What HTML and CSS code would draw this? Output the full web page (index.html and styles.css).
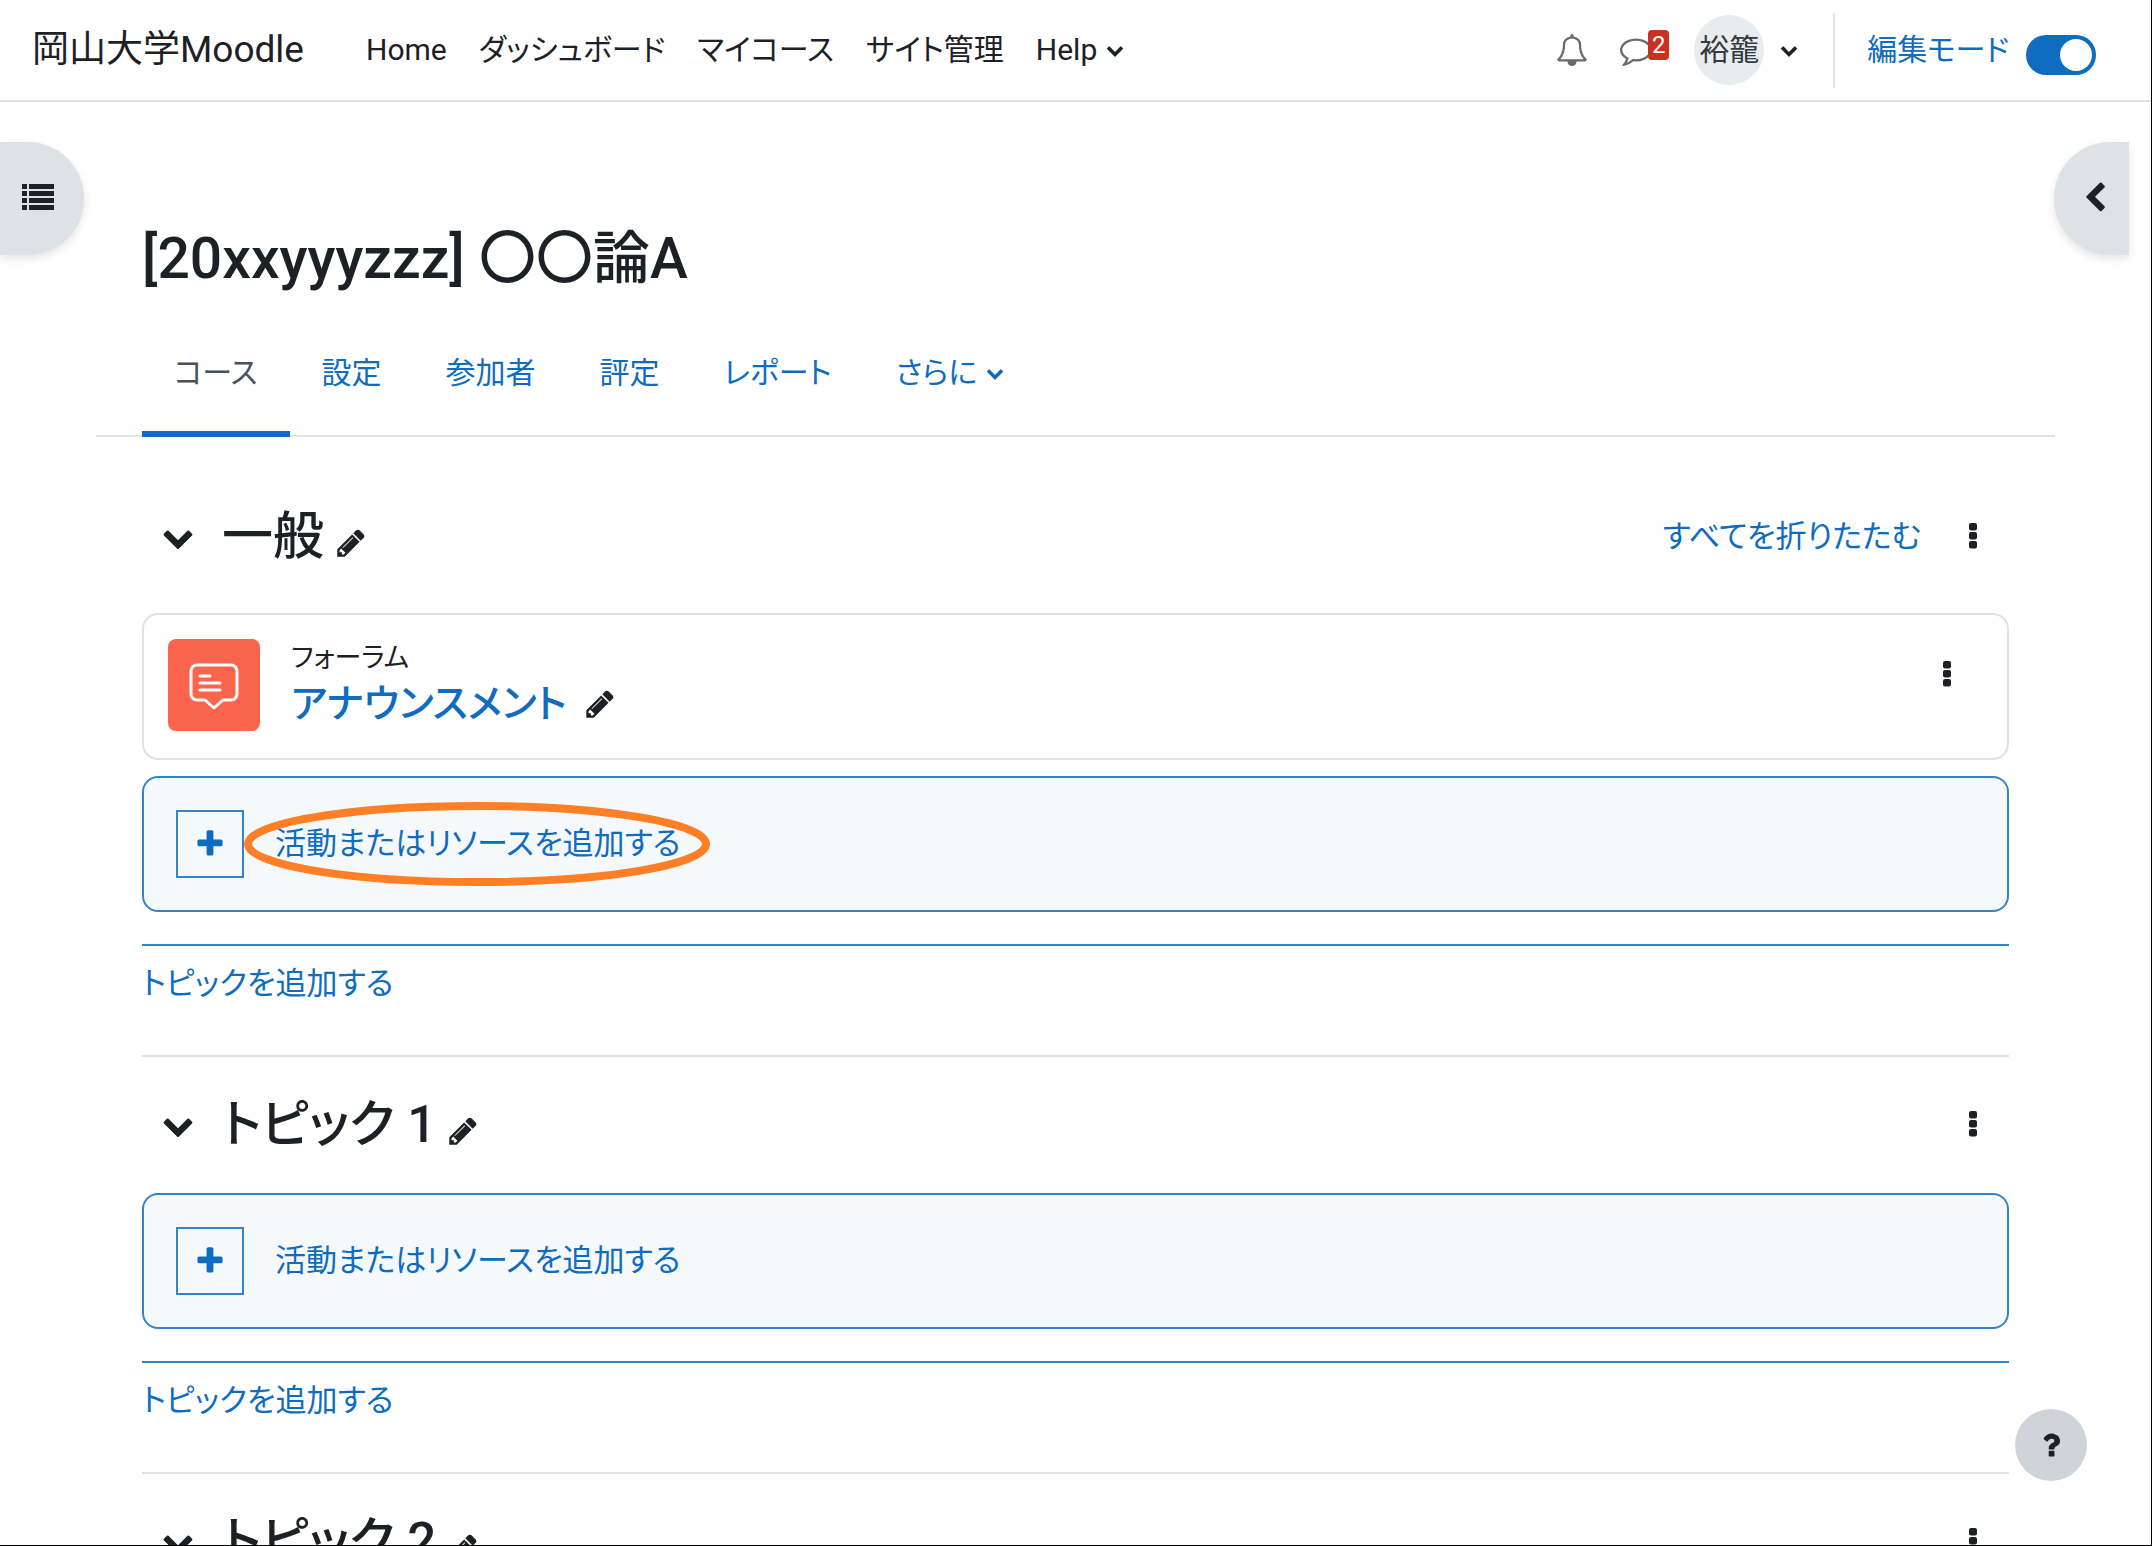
FILE: index.html
```html
<!DOCTYPE html>
<html lang="ja">
<head>
<meta charset="utf-8">
<meta name="viewport" content="width=device-width, initial-scale=1">
<title>[20xxyyyzzz] 〇〇論A</title>
<link rel="stylesheet" href="styles.css">
</head>
<body>
<svg class="sprite" aria-hidden="true">
  <symbol id="i-pencil" viewBox="0 0 1792 1792"><path d="M491 1536l91-91-235-235-91 91v107h128v128h107zm523-928q0-22-22-22-10 0-17 7l-542 542q-7 7-7 17 0 22 22 22 10 0 17-7l542-542q7-7 7-17zm-54-192l416 416-832 832h-416v-416zm683 96q0 53-37 90l-166 166-416-416 166-165q36-38 90-38 53 0 91 38l235 234q37 39 37 91z"/></symbol>
  <symbol id="i-down" viewBox="0 0 1792 1792"><path d="M1683 808l-742 741q-19 19-45 19t-45-19l-742-741q-19-19-19-45.500t19-45.500l166-165q19-19 45-19t45 19l531 531 531-531q19-19 45-19t45 19l166 165q19 19 19 45.500t-19 45.500z"/></symbol>
  <symbol id="i-left" viewBox="0 0 1792 1792"><path d="M1427 301l-531 531 531 531q19 19 19 45t-19 45l-166 166q-19 19-45 19t-45-19l-742-742q-19-19-19-45t19-45l742-742q19-19 45-19t45 19l166 166q19 19 19 45t-19 45z"/></symbol>
  <symbol id="i-plus" viewBox="0 0 1792 1792"><path d="M1600 736v192q0 40-28 68t-68 28h-416v416q0 40-28 68t-68 28h-192q-40 0-68-28t-28-68v-416h-416q-40 0-68-28t-28-68v-192q0-40 28-68t68-28h416v-416q0-40 28-68t68-28h192q40 0 68 28t28 68v416h416q40 0 68 28t28 68z"/></symbol>
  <symbol id="i-dots" viewBox="0 0 32 32"><rect x="12" y="2" width="8" height="7.500" rx="2"/><rect x="12" y="11" width="8" height="7.500" rx="2"/><rect x="12" y="20" width="8" height="7.500" rx="2"/></symbol>
  <symbol id="i-list" viewBox="0 0 32 32"><path d="M0 1h5v5H0zM7 1h25v5H7zM0 8h5v5H0zM7 8h25v5H7zM0 15h5v5H0zM7 15h25v5H7zM0 22h5v5H0zM7 22h25v5H7z"/></symbol>
  <symbol id="i-bell" viewBox="0 0 1792 1792"><path d="M246 1408h1300q-266-300-266-832 0-51-24-105t-69-103-121.500-80.500-169.500-31.500-169.500 31.500-121.500 80.500-69 103-24 105q0 532-266 832zm1482 0q0 52-38 90t-90 38h-448q0 106-75 181t-181 75-181-75-75-181h-448q-52 0-90-38t-38-90q50-42 91-88t85-119.500 74.500-158.500 50-206 19.500-260q0-152 117-282.500t307-158.500q-8-19-8-39 0-40 28-68t68-28 68 28 28 68q0 20-8 39 190 28 307 158.500t117 282.500q0 139 19.500 260t50 206 74.500 158.500 85 119.500 91 88z"/></symbol>
  <symbol id="i-chat" viewBox="0 0 1792 1792"><path d="M896 384q-204 0-381.500 69.500t-282 187.500-104.500 255q0 112 71.500 213.500t201.500 175.500l87 50-27 96q-24 91-70 172 152-63 275-171l43-38 57 6q69 8 130 8 204 0 381.500-69.500t282-187.500 104.500-255-104.500-255-282-187.500-381.500-69.500zm896 512q0 174-120 321.500t-326 233-450 85.500q-70 0-145-8-198 175-460 242-49 14-114 22h-5q-15 0-27-10.500t-16-27.500v-1q-3-4-.5-12t2-10 4.500-9.500l6-9 7-8.500 8-9q7-8 31-34.500t34.500-38 31-39.500 32.500-51 27-59 26-76q-157-89-247.500-220t-90.500-281q0-174 120-321.500t326-233 450-85.500 450 85.500 326 233 120 321.500z"/></symbol>
  <symbol id="i-question" viewBox="0 0 1792 1792"><path d="M1088 1256v240q0 16-12 28t-28 12h-240q-16 0-28-12t-12-28v-240q0-16 12-28t28-12h240q16 0 28 12t12 28zm316-600q0 54-15.500 101t-35 76.500-55 59.500-57.500 43.500-61 35.500q-41 23-68.500 65t-27.500 67q0 17-12 32.500t-28 15.500h-240q-15 0-25.500-18.500t-10.500-37.500v-45q0-83 65-156.500t143-108.500q59-27 84-56t25-76q0-42-46.500-74t-107.500-32q-65 0-108 29-35 25-107 115-13 16-31 16-12 0-25-8l-164-125q-13-10-15.500-25t5.500-28q160-266 464-266 80 0 161 31t146 83 106 127.500 41 158.500z"/></symbol>
</svg>

<div class="page">
  <header class="navbar">
    <a class="brand" href="#">岡山大学Moodle</a>
    <nav class="primary-nav" aria-label="サイト">
      <a href="#">Home</a>
      <a href="#">ダッシュボード</a>
      <a href="#">マイコース</a>
      <a href="#">サイト管理</a>
      <a class="has-menu" href="#">Help<svg class="icon-small"><use href="#i-down"/></svg></a>
    </nav>
    <div class="user-tools">
      <button class="tool" type="button" aria-label="通知"><svg class="icon"><use href="#i-bell"/></svg></button>
      <button class="tool" type="button" aria-label="メッセージ"><svg class="icon"><use href="#i-chat"/></svg><span class="badge">2</span></button>
      <button class="user-menu" type="button"><span class="avatar">裕籠</span><svg class="icon-small"><use href="#i-down"/></svg></button>
      <div class="edit-mode">
        <label for="edit-switch">編集モード</label>
        <input class="switch" id="edit-switch" type="checkbox" role="switch" checked>
      </div>
    </div>
  </header>

  <button class="drawer drawer-left" type="button" aria-label="コースインデックスを開く"><svg class="icon"><use href="#i-list"/></svg></button>
  <button class="drawer drawer-right" type="button" aria-label="ブロックドロワを開く"><svg class="icon"><use href="#i-left"/></svg></button>

  <main class="content">
    <h1>[20xxyyyzzz] 〇〇論A</h1>
    <nav class="tabs" aria-label="コース">
      <a class="active" href="#" aria-current="page">コース</a>
      <a href="#">設定</a>
      <a href="#">参加者</a>
      <a href="#">評定</a>
      <a href="#">レポート</a>
      <a class="has-menu" href="#">さらに<svg class="icon-small"><use href="#i-down"/></svg></a>
    </nav>

    <section class="topic topic-first">
      <div class="topic-head">
        <button class="bare" type="button" aria-label="折りたたむ"><svg class="icon"><use href="#i-down"/></svg></button>
        <h2>一般</h2>
        <button class="bare edit" type="button" aria-label="名称を編集する"><svg class="icon"><use href="#i-pencil"/></svg></button>
        <a class="collapse-all" href="#">すべてを折りたたむ</a>
        <button class="bare menu" type="button" aria-label="編集"><svg class="icon"><use href="#i-dots"/></svg></button>
      </div>
      <article class="activity">
        <span class="activity-icon">
          <svg class="forum-icon" viewBox="0 0 92 92"><path d="M29 26h34a6 6 0 0 1 6 6v23a6 6 0 0 1-6 6h-8l-9 8-9-8h-8a6 6 0 0 1-6-6V32a6 6 0 0 1 6-6z"/><path d="M32 37h10M32 44h20M32 51h20"/></svg>
        </span>
        <div class="activity-text">
          <span class="activity-type">フォーラム</span>
          <div class="activity-name">
            <a href="#">アナウンスメント</a>
            <button class="bare" type="button" aria-label="タイトルを編集する"><svg class="icon"><use href="#i-pencil"/></svg></button>
          </div>
        </div>
        <button class="bare menu" type="button" aria-label="編集"><svg class="icon"><use href="#i-dots"/></svg></button>
      </article>
      <div class="add-bar">
        <button class="add-activity" type="button"><span class="plus"><svg class="icon"><use href="#i-plus"/></svg></span>活動またはリソースを追加する</button>
        <svg class="highlight" viewBox="0 0 467 85" aria-hidden="true"><ellipse cx="233" cy="42" rx="229" ry="38"/></svg>
      </div>
      <div class="add-topic"><a href="#">トピックを追加する</a></div>
    </section>

    <section class="topic">
      <div class="topic-head">
        <button class="bare" type="button" aria-label="折りたたむ"><svg class="icon"><use href="#i-down"/></svg></button>
        <h2>トピック 1</h2>
        <button class="bare edit" type="button" aria-label="名称を編集する"><svg class="icon"><use href="#i-pencil"/></svg></button>
        <button class="bare menu" type="button" aria-label="編集"><svg class="icon"><use href="#i-dots"/></svg></button>
      </div>
      <div class="add-bar">
        <button class="add-activity" type="button"><span class="plus"><svg class="icon"><use href="#i-plus"/></svg></span>活動またはリソースを追加する</button>
      </div>
      <div class="add-topic"><a href="#">トピックを追加する</a></div>
    </section>

    <section class="topic">
      <div class="topic-head">
        <button class="bare" type="button" aria-label="折りたたむ"><svg class="icon"><use href="#i-down"/></svg></button>
        <h2>トピック 2</h2>
        <button class="bare edit" type="button" aria-label="名称を編集する"><svg class="icon"><use href="#i-pencil"/></svg></button>
        <button class="bare menu" type="button" aria-label="編集"><svg class="icon"><use href="#i-dots"/></svg></button>
      </div>
    </section>
  </main>

  <button class="help" type="button" aria-label="ヘルプ"><svg class="icon"><use href="#i-question"/></svg></button>
</div>
</body>
</html>
```
FILE: styles.css
```css
* { box-sizing: border-box; }

body {
  margin: 0;
  color: #1d2125;
  background: #fff;
  font-family: Roboto, "Noto Sans CJK JP", sans-serif;
  font-size: 30px;
  line-height: 44px;
  font-feature-settings: "palt";
}

a { color: #0f6cbf; text-decoration: none; }

button {
  padding: 0;
  border: 0;
  background: none;
  color: inherit;
  font: inherit;
  font-feature-settings: inherit;
  cursor: pointer;
}

svg { display: block; flex: none; fill: currentColor; }

.sprite { position: absolute; width: 0; height: 0; }
.icon { width: 32px; height: 32px; }
.icon-small { width: 18px; height: 18px; }

.page {
  position: relative;
  height: 100vh;
  overflow: hidden;
  border-right: 1px solid #000;
  border-bottom: 1px solid #000;
}

/* Top bar */
.navbar {
  display: flex;
  align-items: center;
  height: 102px;
  padding: 0 55px 0 32px;
  border-bottom: 2px solid #dee2e6;
}
.navbar a { color: #1d2125; }
.brand { margin-right: 62px; font-size: 37px; }
.primary-nav { display: flex; gap: 32px; }
.has-menu { display: flex; align-items: center; gap: 9px; }

.user-tools {
  display: flex;
  align-items: center;
  margin-left: auto;
}
.tool {
  position: relative;
  margin-right: 32px;
  color: #6a6a6a;
}
.tool .icon { stroke: currentColor; stroke-width: 1px; }
.badge {
  position: absolute;
  top: -4px;
  left: 28px;
  width: 21px;
  height: 30px;
  border-radius: 4px;
  background: #ca3120;
  color: #fff;
  font-size: 24px;
  line-height: 30px;
}
.user-menu {
  display: flex;
  align-items: center;
  gap: 16px;
  margin: 0 35px 0 10px;
}
.avatar {
  width: 70px;
  border-radius: 50%;
  background: #e9ecef;
  color: #343a40;
  line-height: 70px;
  white-space: nowrap;
}
.edit-mode {
  display: flex;
  align-items: center;
  gap: 17px;
  height: 75px;
  padding-left: 32px;
  border-left: 2px solid #dee2e6;
  color: #0f6cbf;
}
.switch {
  appearance: none;
  width: 70px;
  height: 40px;
  margin: 10px 0 0;
  padding: 4px;
  border-radius: 20px;
  background: #adb5bd;
}
.switch::before {
  content: "";
  display: block;
  width: 32px;
  height: 32px;
  border-radius: 50%;
  background: #fff;
}
.switch:checked { background: #0f6cbf; }
.switch:checked::before { margin-left: auto; }

/* Drawer handles and help button float over the page */
.drawer {
  position: absolute;
  top: 142px;
  display: flex;
  align-items: center;
  height: 113px;
  background: #dee2e6;
  box-shadow: 0 4px 8px rgba(0, 0, 0, .1);
}
.drawer-left {
  left: 0;
  width: 84px;
  padding-left: 22px;
  border-radius: 0 56px 56px 0;
}
.drawer-right {
  right: 22px;
  width: 75px;
  padding: 0 0 2px 25px;
  border-radius: 56px 0 0 56px;
}
.help {
  position: absolute;
  right: 64px;
  bottom: 64px;
  display: grid;
  place-items: center;
  width: 72px;
  height: 72px;
  border-radius: 50%;
  background: #ced4da;
}

/* Course page */
.content { padding: 123px 142px 0; }

h1 {
  margin: 0;
  font-size: 57px;
  font-weight: 500;
  line-height: 68px;
}

.tabs {
  display: flex;
  margin: 22px -46px 0;
  padding: 0 46px;
  border-bottom: 2px solid #dee2e6;
}
.tabs a {
  margin-bottom: -2px;
  padding: 36px 32px 36px;
  border-bottom: 6px solid transparent;
}
.tabs .active {
  border-bottom-color: #0f6cbf;
  color: #495057;
}

.topic { border-top: 2px solid #dee2e6; }
.topic-first { border-top: 0; }
.topic-head {
  display: flex;
  align-items: center;
  height: 136px;
  padding: 0 20px;
}
.topic-first .topic-head { height: 176px; padding-top: 24px; }

h2 {
  margin: 0 0 0 28px;
  font-size: 51px;
  font-weight: 500;
  line-height: 60px;
}
.edit { margin: 12px 0 0 11px; }
.menu { margin-left: auto; }
.collapse-all { margin-left: auto; font-size: 31px; }
.collapse-all + .menu { margin-left: 36px; }

.activity {
  display: flex;
  align-items: center;
  height: 147px;
  margin-bottom: 16px;
  padding: 0 44px 4px 24px;
  border: 2px solid #dee2e6;
  border-radius: 16px;
}
.activity-icon {
  width: 92px;
  height: 92px;
  border-radius: 8px;
  background: #fb654d;
}
.forum-icon {
  fill: none;
  stroke: #fff;
  stroke-width: 3px;
  stroke-linecap: round;
  stroke-linejoin: round;
}
.activity-text { margin-left: 31px; }
.activity-type {
  display: block;
  font-size: 27px;
  line-height: 38px;
}
.activity-name {
  display: flex;
  align-items: center;
  gap: 17px;
  font-size: 39px;
  font-weight: 500;
  line-height: 54px;
}
.activity .menu { margin-bottom: 20px; }

.add-bar {
  position: relative;
  padding: 32px;
  border: 2px solid #3584c9;
  border-radius: 16px;
  background: #f5f9fc;
}
.add-activity {
  display: flex;
  align-items: center;
  gap: 31px;
  color: #0f6cbf;
  font-size: 31px;
}
.plus {
  display: grid;
  place-items: center;
  width: 68px;
  height: 68px;
  border: 2px solid #3584c9;
}
.highlight {
  position: absolute;
  top: 24px;
  left: 100px;
  width: 467px;
  height: 85px;
  fill: none;
  stroke: #ff7f27;
  stroke-width: 8px;
  pointer-events: none;
}
.add-topic {
  height: 111px;
  margin-top: 32px;
  padding-top: 16px;
  border-top: 2px solid #3584c9;
  font-size: 31px;
}
```
